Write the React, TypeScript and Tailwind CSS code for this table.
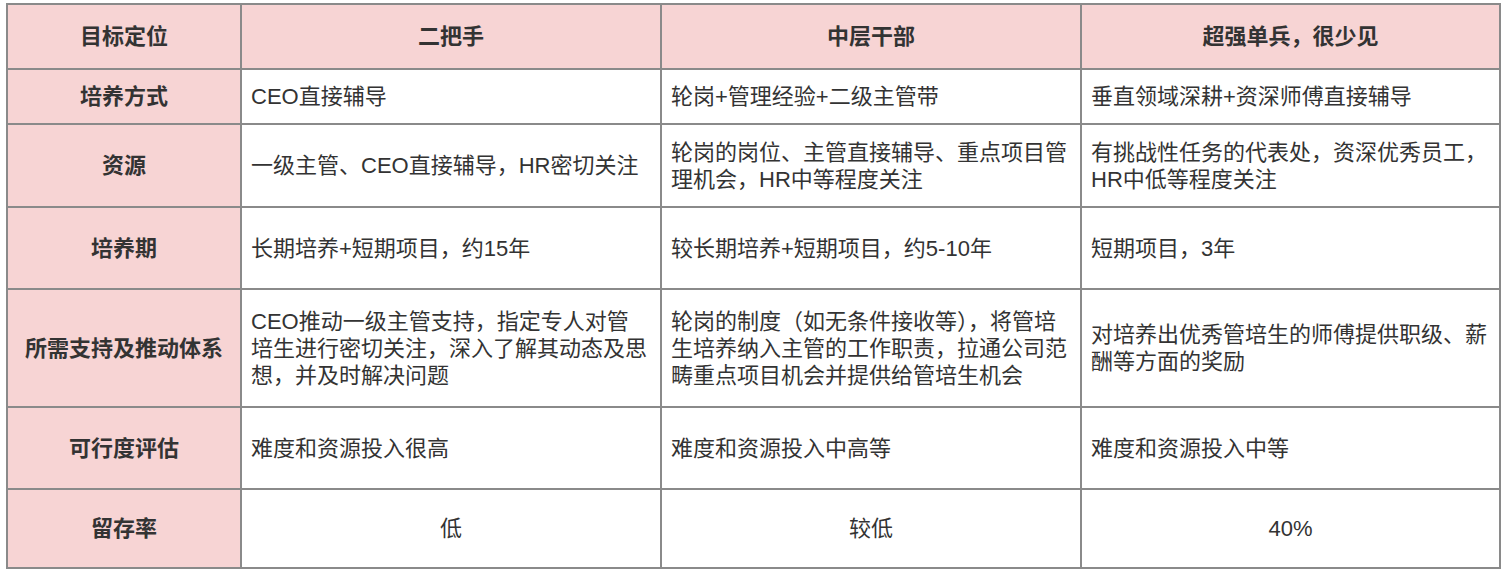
import React from 'react';

type Row = {
  label: string;
  cells: React.ReactNode[];
  height: string;
  center?: boolean;
};

const headers = ['目标定位', '二把手', '中层干部', '超强单兵，很少见'];

const rows: Row[] = [
  {
    label: '培养方式',
    height: 'h-[55px]',
    cells: ['CEO直接辅导', '轮岗+管理经验+二级主管带', '垂直领域深耕+资深师傅直接辅导'],
  },
  {
    label: '资源',
    height: 'h-[83px]',
    cells: [
      '一级主管、CEO直接辅导，HR密切关注',
      <>轮岗的岗位、主管直接辅导、重点项目管<br />理机会，HR中等程度关注</>,
      <>有挑战性任务的代表处，资深优秀员工，<br />HR中低等程度关注</>,
    ],
  },
  {
    label: '培养期',
    height: 'h-[82px]',
    cells: ['长期培养+短期项目，约15年', '较长期培养+短期项目，约5-10年', '短期项目，3年'],
  },
  {
    label: '所需支持及推动体系',
    height: 'h-[118px]',
    cells: [
      <>CEO推动一级主管支持，指定专人对管<br />培生进行密切关注，深入了解其动态及思<br />想，并及时解决问题</>,
      <>轮岗的制度（如无条件接收等），将管培<br />生培养纳入主管的工作职责，拉通公司范<br />畴重点项目机会并提供给管培生机会</>,
      <>对培养出优秀管培生的师傅提供职级、薪<br />酬等方面的奖励</>,
    ],
  },
  {
    label: '可行度评估',
    height: 'h-[82px]',
    cells: ['难度和资源投入很高', '难度和资源投入中高等', '难度和资源投入中等'],
  },
  {
    label: '留存率',
    height: 'h-[79px]',
    center: true,
    cells: ['低', '较低', '40%'],
  },
];

const App: React.FC = () => {
  return (
    <div className="bg-white w-[1504px] h-[578px] pt-[3px] pl-[6px] font-['Liberation_Sans','Noto_Sans_CJK_SC',sans-serif] text-[#333333]">
      <table className="table-fixed border-collapse border-2 border-[#8a8a8a] w-[1493px]">
        <colgroup>
          <col className="w-[234px]" />
          <col className="w-[420px]" />
          <col className="w-[420px]" />
          <col className="w-[419px]" />
        </colgroup>
        <thead>
          <tr>
            {headers.map((h) => (
              <th
                key={h}
                className="h-[65px] bg-[#f7d4d4] border-2 border-[#8a8a8a] text-[22px] font-bold text-center align-middle"
              >
                {h}
              </th>
            ))}
          </tr>
        </thead>
        <tbody>
          {rows.map((row) => (
            <tr key={row.label}>
              <td
                className={`${row.height} bg-[#f7d4d4] border-2 border-[#8a8a8a] text-[22px] font-bold text-center align-middle`}
              >
                {row.label}
              </td>
              {row.cells.map((cell, i) => (
                <td
                  key={i}
                  className={`${row.center ? 'text-center' : 'text-left pl-[9px]'} border-2 border-[#8a8a8a] text-[22px] leading-[27px] align-middle whitespace-nowrap`}
                >
                  {cell}
                </td>
              ))}
            </tr>
          ))}
        </tbody>
      </table>
    </div>
  );
};

export default App;
